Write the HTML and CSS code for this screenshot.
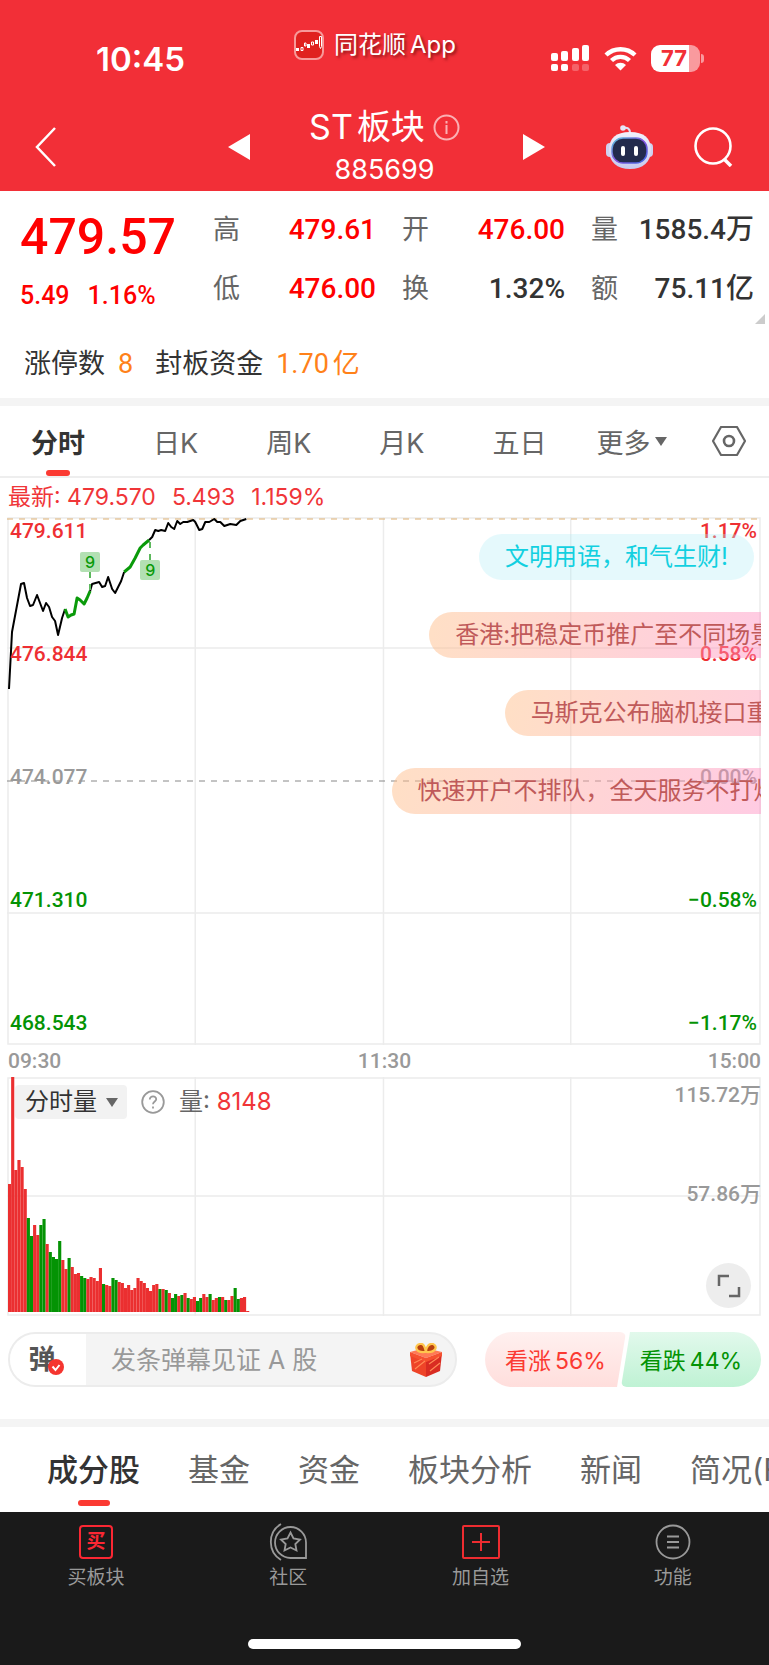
FILE: index.html
```html
<!DOCTYPE html>
<html lang="zh-CN">
<head>
  <meta charset="UTF-8">
  <meta name="viewport" content="width=device-width, initial-scale=1.0">
  <title>ST板块 885699</title>
  <link rel="stylesheet" href="styles.css">
</head>
<body>
  <header class="header">
    <div class="status-bar">
      <span class="clock">10:45</span>
      <div class="app-name">
        <svg width="30" height="30" viewBox="0 0 30 30" fill="#fff">
          <rect x="1" y="1" width="28" height="28" rx="7" fill="#e0211f" stroke="#f79a9a" stroke-width="2"/>
          <path d="M2 18h3v3H2zM13 14h3v4h-3zM21 10h3v4h-3z"/>
          <path d="M7 17.500h2v3H7zM10.500 13h1.500v3h-1.500zM17.500 12h2v3h-2zM25.500 6.500h2v10l-1 2-1-2z" fill="none" stroke="#fff"/>
        </svg>
        <span class="mixed"><span>同花顺</span><span>App</span></span>
      </div>
      <div class="status-icons">
        <svg width="39" height="28" viewBox="0 0 39 28" fill="#fff">
          <rect x="0" y="9" width="7" height="8" rx="2"/>
          <rect x="10" y="7" width="7" height="10" rx="2"/>
          <rect x="21" y="4" width="7" height="13" rx="2"/>
          <rect x="31" y="1" width="7" height="16" rx="2"/>
          <rect x="0" y="20" width="7" height="7" rx="2"/>
          <rect x="10" y="20" width="7" height="7" rx="2"/>
          <rect x="21" y="20" width="7" height="7" rx="2" opacity=".25"/>
          <rect x="31" y="20" width="7" height="7" rx="2" opacity=".25"/>
        </svg>
        <svg width="33" height="25" viewBox="0 0 33 25" fill="none" stroke="#fff" stroke-width="4.400">
          <path d="M2 9a21 21 0 0 1 29 0M7.500 14.500a13 13 0 0 1 18 0"/>
          <path d="M11 19a8 8 0 0 1 11 0l-5.500 5.500z" fill="#fff" stroke="none"/>
        </svg>
        <span class="battery">77</span>
      </div>
    </div>
    <nav class="nav">
      <button class="icon-btn back" aria-label="返回">
        <svg width="22" height="40" viewBox="0 0 22 40" fill="none" stroke="#fff" stroke-width="2.500"><path d="M20 1 2 20l18 19"/></svg>
      </button>
      <button class="icon-btn" aria-label="上一个">
        <svg width="22" height="26" viewBox="0 0 22 26"><path d="M22 0v26L0 13z" fill="#fff"/></svg>
      </button>
      <div class="title">
        <h1>
          <span class="mixed"><span>ST</span><span>板块</span></span>
          <svg width="27" height="27" viewBox="0 0 27 27" fill="none" stroke="#fbb0b3" stroke-width="2">
            <circle cx="13.500" cy="13.500" r="12"/><path d="M13.500 11v9M13.500 7v2.500"/>
          </svg>
        </h1>
        <span class="code">885699</span>
      </div>
      <button class="icon-btn" aria-label="下一个">
        <svg width="22" height="26" viewBox="0 0 22 26"><path d="M0 0v26l22-13z" fill="#fff"/></svg>
      </button>
      <button class="icon-btn robot" aria-label="智能助手">
        <svg width="47" height="44" viewBox="0 0 47 44">
          <defs>
            <linearGradient id="shell" x1="0" y1="0" x2="0" y2="1"><stop offset="0" stop-color="#f2f2fc"/><stop offset="1" stop-color="#c7c9ee"/></linearGradient>
            <linearGradient id="rim" x1="0" y1="0" x2="1" y2="1"><stop offset="0" stop-color="#56c7dc"/><stop offset=".5" stop-color="#8552e0"/><stop offset="1" stop-color="#3d6be0"/></linearGradient>
          </defs>
          <path d="M17 3c5-1 7 1 7 5" fill="none" stroke="#e0e0f5" stroke-width="2"/>
          <circle cx="17" cy="3" r="2.800" fill="#e6e6f8"/>
          <rect x="0" y="18" width="9" height="14" rx="4" fill="#cfd2f0"/>
          <rect x="38" y="18" width="9" height="14" rx="4" fill="#cfd2f0"/>
          <path d="M24 7c14 0 21 6 21 18S37 44 24 44 3 37 3 25 10 7 24 7z" fill="url(#shell)"/>
          <rect x="6" y="13" width="35" height="25" rx="11" fill="#232b4d" stroke="url(#rim)" stroke-width="1.500"/>
          <rect x="15" y="21" width="4" height="10" rx="2" fill="#fff"/>
          <rect x="28" y="21" width="4" height="10" rx="2" fill="#fff"/>
        </svg>
      </button>
      <button class="icon-btn search" aria-label="搜索">
        <svg width="39" height="40" viewBox="0 0 39 40" fill="none" stroke="#fff" stroke-width="2.600"><circle cx="19" cy="19" r="17.500"/><path d="M30 32l7 7" stroke-width="3.500"/></svg>
      </button>
    </nav>
  </header>

  <section class="quote">
    <div class="price">
      <strong>479.57</strong>
      <div class="change"><span>5.49</span><span>1.16%</span></div>
    </div>
    <dl class="stats">
      <div><dt>高</dt><dd class="up">479.61</dd></div>
      <div><dt>开</dt><dd class="up">476.00</dd></div>
      <div><dt>量</dt><dd>1585.4万</dd></div>
      <div><dt>低</dt><dd class="up">476.00</dd></div>
      <div><dt>换</dt><dd>1.32%</dd></div>
      <div><dt>额</dt><dd>75.11亿</dd></div>
    </dl>
  </section>
  <div class="limit">
    <span>涨停数</span><b>8</b>
    <span class="fund">封板资金</span><b class="mixed"><span>1.70</span><span>亿</span></b>
  </div>

  <div class="divider"></div>

  <div class="period-tabs">
    <div class="periods">
      <button class="active">分时</button>
      <button>日K</button>
      <button>周K</button>
      <button>月K</button>
      <button>五日</button>
    </div>
    <button class="more">更多<i class="caret"></i></button>
    <button class="icon-btn setting" aria-label="设置">
      <svg width="34" height="30" viewBox="0 0 34 30" fill="none" stroke="#666" stroke-width="2.200" stroke-linejoin="round"><path d="M9 1h16l8 14-8 14H9L1 15z"/><circle cx="17" cy="15" r="5" stroke-width="2.600"/></svg>
    </button>
  </div>

  <div class="latest"><span>最新: 479.570</span><span>5.493</span><span>1.159%</span></div>

  <section class="chart price-chart">
    <svg class="plot" viewBox="0 0 753 528" preserveAspectRatio="none">
      <path class="grid" d="M1 1h751v526H1zM188 0v528M376 0v528M563 0v528M0 131h753M0 396h753"/>
      <path class="high" d="M0 2h753"/>
      <path class="zero" d="M0 264h753"/>
      <polyline class="line" points="2,172 5,115 14,67 17,66 20,81 23,89 26,88 30,78 33,86 36,94 39,86 42,90 45,100 48,104 51,118 55,101 58,92"/>
      <polyline class="line nine" points="58,92 61,100 64,98 67,97 70,81 73,83 77,87 80,81 83,74"/>
      <polyline class="line" points="83,74 85,67 92,65 95,70 98,69 101,60 105,72 108,76 111,70 114,64 117,55"/>
      <polyline class="line nine" points="117,55 123,50 128,41 133,31 136,28 142,23"/>
      <polyline class="line" points="142,23 145,20 148,13 151,14 154,13 158,14 161,6 164,10 167,12 170,4 173,7 176,5 180,5 186,3 188,5 192,13 195,12 198,5 202,5 207,2 210,5 213,5 217,9 223,7 229,8 233,4 239,2"/>
    </svg>
    <div class="axis">
      <div><span class="rise">479.611</span><span class="rise">1.17%</span></div>
      <div><span class="rise">476.844</span><span class="rise">0.58%</span></div>
      <div><span>474.077</span><span>0.00%</span></div>
      <div><span class="fall">471.310</span><span class="fall">−0.58%</span></div>
      <div><span class="fall">468.543</span><span class="fall">−1.17%</span></div>
    </div>
    <span class="flag flag-above">9</span>
    <span class="flag flag-below">9</span>
    <div class="bullets">
      <p class="bullet own">文明用语，和气生财!</p>
      <p class="bullet b2">香港:把稳定币推广至不同场景</p>
      <p class="bullet b3">马斯克公布脑机接口重大进展</p>
      <p class="bullet b4">快速开户不排队，全天服务不打烊</p>
    </div>
  </section>

  <div class="times"><span>09:30</span><span>11:30</span><span>15:00</span></div>

  <section class="chart volume-chart">
    <svg class="plot" viewBox="0 0 753 239" preserveAspectRatio="none">
      <path class="grid" d="M1 1h751v237H1zM188 0v239M376 0v239M563 0v239M0 119h753"/>
      <g id="bars"></g>
    </svg>
    <div class="volume-axis"><span>115.72万</span><span>57.86万</span></div>
    <div class="volume-head">
      <div class="picker">
        <select aria-label="指标"><option>分时量</option><option>MACD</option></select>
        <i class="caret"></i>
      </div>
      <button class="icon-btn" aria-label="说明">
        <svg width="24" height="24" viewBox="0 0 24 24" fill="none" stroke="#999" stroke-width="1.800"><circle cx="12" cy="12" r="10.800"/><path d="M8.800 9.500c0-4.300 6.600-4 6.400-.2-.1 2.200-3.200 2.400-3.200 5M12 16.500v2"/></svg>
      </button>
      <span class="volume-label">量: <b>8148</b></span>
    </div>
    <button class="expand" aria-label="全屏">
      <svg width="24" height="24" viewBox="0 0 24 24" fill="none" stroke="#666" stroke-width="2.500"><path d="M2 12V2h10M22 13v9H12"/></svg>
    </button>
  </section>

  <div class="talk">
    <div class="talk-box">
      <button class="talk-switch" aria-label="弹幕开关">弹
        <svg width="16" height="16" viewBox="0 0 16 16"><circle cx="8" cy="8" r="8" fill="#f5352f"/><path d="M4.500 7.500 7.500 11l4-5" fill="none" stroke="#fff" stroke-width="2"/></svg>
      </button>
      <input type="text" aria-label="发弹幕" placeholder="发条弹幕见证 A 股">
      <button class="icon-btn gift" aria-label="礼物">
        <svg width="34" height="34" viewBox="0 0 34 34">
          <path d="M1 10l16 6v18L3 28z" fill="#ee4428"/>
          <path d="M33 10l-16 6v18l14-6z" fill="#d92c22"/>
          <path d="M1 9l15-4 17 4-16 6z" fill="#ff7a55"/>
          <path d="M1 9l16 6 16-6v4l-16 6L1 13z" fill="#f5512f"/>
          <path d="M5 20l8-4M6 26l10-8M20 21l10-7M21 28l10-8" stroke="#ff8a55" stroke-width="1.200"/>
          <path d="M16 9C6 10 5 2 11 1c4-1 5 4 6 8 0-5 3-9 7-8 5 2 3 9-7 8z" fill="#b8400f" stroke="#ffc64d" stroke-width="2.200"/>
        </svg>
      </button>
    </div>
    <div class="vote">
      <button class="vote-up"><span class="mixed"><span>看涨</span><span>56%</span></span></button>
      <button class="vote-down"><span class="mixed"><span>看跌</span><span>44%</span></span></button>
    </div>
  </div>

  <div class="divider"></div>

  <nav class="section-tabs">
    <a href="#" class="active">成分股</a>
    <a href="#">基金</a>
    <a href="#">资金</a>
    <a href="#">板块分析</a>
    <a href="#">新闻</a>
    <a href="#">简况(F10)</a>
  </nav>

  <footer class="bottom-bar">
    <div class="actions">
      <button>
        <span class="buy-icon">买</span>
        买板块
      </button>
      <button>
        <svg width="40" height="38" viewBox="0 0 40 38" fill="none" stroke="#999" stroke-width="1.800">
          <path d="M38 35H22.500A15.500 15.500 0 1 1 38 19.500zM13 1a21 21 0 0 0 0 36"/>
          <path d="M22.500 9.500l3 6 6.500 1-4.700 4.500 1.200 6.500-6-3-6 3 1.200-6.500-4.700-4.500 6.500-1z"/>
        </svg>
        社区
      </button>
      <button>
        <svg width="38" height="38" viewBox="0 0 38 38" fill="none" stroke="#ee2c30" stroke-width="2"><rect x="1" y="3" width="36" height="32" rx="1"/><path d="M10 19h18M19 10v18"/></svg>
        加自选
      </button>
      <button>
        <svg width="38" height="38" viewBox="0 0 38 38" fill="none" stroke="#999" stroke-width="1.800"><circle cx="19" cy="19" r="16.500"/><path d="M13 13.500h12M13 19h12M13 24.500h12"/></svg>
        功能
      </button>
    </div>
    <div class="home-bar"></div>
  </footer>

  <script>
    // One entry per minute: bar height, negative when the bar is green
    const volumes = [
      128, 235, 142, 152, 145, 123, -94, -76, 87, 77, -87, -93, 68, -60, -55, -53,
      -71, 52, 43, -54, 45, 38, 39, -36, -34, 33, 35, 34, 31, 44, -28, 27,
      26, -34, -32, 30, 29, 24, 27, 22, 24, 34, 31, 29, 24, 21, 27, 28,
      -23, 23, -22, 19, -14, -18, 16, -17, 19, -14, 13, 15, -11, -14, 18, 15,
      -18, 12, 14, -15, 15, -12, 12, 16, -24, -13, 14, 15, 1
    ];
    const step = 751 / 240;
    const bars = document.getElementById("bars");

    volumes.forEach((value, i) => {
      const bar = document.createElementNS("http://www.w3.org/2000/svg", "rect");
      const height = Math.abs(value);
      bar.setAttribute("x", 1 + i * step);
      bar.setAttribute("y", 235 - height);
      bar.setAttribute("width", step);
      bar.setAttribute("height", height);
      bar.setAttribute("fill", value < 0 ? "#049304" : "#eb2f30");
      bars.appendChild(bar);
    });
  </script>
</body>
</html>
```
FILE: styles.css
```css
* {
  box-sizing: border-box;
}
body {
  margin: 0;
  background-color: #fff;
  color: #333;
  font-family: Inter, "Noto Sans CJK SC", sans-serif;
  font-size: 27px;
  overflow-x: hidden;
}
button {
  padding: 0;
  border: none;
  background: none;
  color: inherit;
  font: inherit;
  cursor: pointer;
}
svg {
  display: block;
  flex: none;
}
.icon-btn {
  display: flex;
  align-items: center;
}
.mixed {
  display: inline-flex;
  align-items: baseline;
  gap: 4px;
}
.divider {
  height: 8px;
  background-color: #f4f4f4;
}
.caret {
  border: 6px solid transparent;
  border-top: 9px solid #666;
  border-bottom: none;
}

/* Header */
.header {
  background-color: #f22f37;
  color: #fff;
}
.status-bar {
  display: flex;
  height: 103px;
  padding: 27px 65px 0 96px;
}
.clock {
  width: 198px;
  padding-top: 12px;
  font-size: 33px;
  font-weight: 600;
  line-height: 40px;
}
.app-name {
  display: flex;
  align-items: center;
  gap: 10px;
  height: 36px;
  font-size: 24px;
  line-height: 36px;
  text-shadow: 2px 2px 3px rgba(70, 0, 0, 0.6);
}
.status-icons {
  display: flex;
  align-items: center;
  gap: 14px;
  height: 36px;
  margin: 13px 0 0 auto;
}
.battery {
  position: relative;
  width: 49px;
  height: 27px;
  margin-right: 4px;
  border-radius: 9px;
  background: linear-gradient(to right, #fff 77%, #f99a9e 77%);
  color: #f22f37;
  font-size: 22px;
  font-weight: 700;
  line-height: 27px;
  padding-left: 10px;
}
.battery::after {
  content: "";
  position: absolute;
  right: -4px;
  top: 9px;
  width: 3px;
  height: 9px;
  border-radius: 0 3px 3px 0;
  background-color: #f99a9e;
}
.nav {
  display: flex;
  align-items: center;
  height: 88px;
  padding: 0 36px 0 35px;
}
.back {
  width: 193px;
}
.title {
  flex: 1;
  padding-right: 4px;
  text-align: center;
}
.title h1 {
  display: flex;
  justify-content: center;
  align-items: center;
  gap: 8px;
  margin: 0 0 8px;
  font-size: 34px;
  font-weight: 400;
  line-height: 38px;
}
.code {
  display: block;
  line-height: 32px;
}
.robot {
  margin-left: 61px;
}
.search {
  margin-left: 41px;
}

/* Quote */
.quote {
  position: relative;
  display: flex;
  height: 133px;
  padding: 18px 15px 0 20px;
  font-family: Roboto, "Noto Sans CJK SC", sans-serif;
}
.quote::after {
  content: "";
  position: absolute;
  right: 4px;
  bottom: 0;
  border-left: 10px solid transparent;
  border-bottom: 10px solid #ccc;
}
.price {
  width: 193px;
  color: #f00;
}
.price strong {
  display: block;
  font-size: 50px;
  font-weight: 500;
  line-height: 56px;
}
.change {
  display: flex;
  gap: 18px;
  margin-top: 16px;
  font-size: 25px;
  font-weight: 500;
  line-height: 30px;
}
.stats {
  flex: 1;
  display: grid;
  grid-template-columns: repeat(3, 1fr);
  align-content: start;
  gap: 23px 26px;
  margin: 3px 0 0;
  line-height: 36px;
}
.stats div {
  display: flex;
  justify-content: space-between;
}
.stats dt {
  color: #666;
}
.stats dd {
  margin: 0;
  font-size: 28px;
  font-weight: 500;
  white-space: nowrap;
}
.stats .up {
  color: #f00;
}
.limit {
  display: flex;
  padding: 20px 24px 14px;
  line-height: 40px;
}
.limit b {
  margin-left: 13px;
  color: #ff8119;
  font-family: Roboto, "Noto Sans CJK SC", sans-serif;
  font-weight: 400;
}
.limit .fund {
  margin-left: 22px;
}

/* Period tabs */
.period-tabs {
  display: flex;
  align-items: center;
  height: 72px;
  padding: 0 23px 0 31px;
  border-bottom: 2px solid #eee;
  color: #666;
}
.periods {
  display: flex;
  gap: 68px;
}
.periods button {
  position: relative;
  height: 70px;
}
.period-tabs .active {
  color: #333;
  font-weight: 700;
}
.period-tabs .active::after {
  content: "";
  position: absolute;
  left: 50%;
  bottom: 0;
  width: 24px;
  height: 6px;
  margin-left: -12px;
  border-radius: 3px;
  background-color: #fb3a32;
}
.more {
  display: flex;
  align-items: center;
  gap: 5px;
  margin-left: 50px;
}
.setting {
  margin-left: auto;
}
.latest {
  display: flex;
  gap: 16px;
  padding: 0 8px;
  color: #f03538;
  font-size: 23px;
  line-height: 39px;
}

/* Charts */
.chart {
  position: relative;
  margin: 0 8px 0 7px;
}
.price-chart {
  height: 528px;
}
.volume-chart {
  height: 239px;
}
.plot {
  width: 100%;
  height: 100%;
}
.plot path,
.plot polyline {
  fill: none;
  vector-effect: non-scaling-stroke;
}
.grid {
  stroke: #ececec;
  stroke-width: 1.5px;
}
.high {
  stroke: #deb072;
  stroke-dasharray: 6 6;
}
.zero {
  stroke: #888;
  stroke-dasharray: 6 6;
}
.line {
  stroke: #000;
  stroke-width: 2px;
  stroke-linejoin: round;
}
.plot .nine {
  stroke: #0a9a0a;
  stroke-width: 3px;
}
.axis,
.bullets {
  position: absolute;
  inset: 0;
  display: flex;
  flex-direction: column;
}
.axis {
  justify-content: space-between;
  padding: 0 4px 8px 3px;
  color: #999;
  font-family: Roboto, sans-serif;
  font-size: 21px;
  font-weight: 500;
  line-height: 28px;
}
.axis div {
  display: flex;
  justify-content: space-between;
}
.rise {
  color: #ee2f33;
}
.fall {
  color: #049304;
}
.flag {
  position: absolute;
  width: 20px;
  height: 20px;
  margin-left: -10px;
  border-radius: 2px;
  background-color: #b3e0b3;
  color: #0a9a0a;
  font-size: 16px;
  font-weight: 500;
  line-height: 20px;
  text-align: center;
}
.flag::after {
  content: "";
  position: absolute;
  left: 9px;
  height: 18px;
  border-left: 2px dashed #5cb85c;
}
.flag-above {
  left: 11%;
  top: 35px;
}
.flag-above::after {
  top: 20px;
}
.flag-below {
  left: 19%;
  top: 43px;
}
.flag-below::after {
  bottom: 20px;
}
.bullets {
  gap: 32px;
  align-items: flex-start;
  padding-top: 17px;
  overflow: hidden;
}
.bullet {
  flex: none;
  margin: 0;
  padding: 0 26px;
  border-radius: 23px;
  background: linear-gradient(100deg, rgba(255, 192, 140, 0.5), rgba(255, 135, 200, 0.45));
  color: #c05a5a;
  font-size: 24px;
  line-height: 46px;
  white-space: nowrap;
}
.own {
  align-self: flex-end;
  margin-right: 7px;
  background: rgba(180, 238, 246, 0.35);
  color: #12d0e0;
}
.b2 {
  margin-left: 56%;
}
.b3 {
  margin-left: 66%;
}
.b4 {
  margin-left: 51%;
}
.times {
  display: flex;
  justify-content: space-between;
  padding: 0 8px;
  color: #999;
  font-family: Roboto, sans-serif;
  font-size: 21px;
  font-weight: 500;
  line-height: 32px;
}
.volume-axis {
  position: absolute;
  top: 4px;
  right: 0;
  display: flex;
  flex-direction: column;
  gap: 71px;
  color: #999;
  font-family: Roboto, "Noto Sans CJK SC", sans-serif;
  font-size: 21px;
  font-weight: 500;
  line-height: 28px;
  text-align: right;
}
.volume-head {
  position: absolute;
  top: 8px;
  left: 8px;
  display: flex;
  align-items: center;
  gap: 14px;
  font-size: 24px;
  line-height: 34px;
}
.picker {
  position: relative;
}
.picker select {
  width: 112px;
  height: 34px;
  padding: 0 10px;
  appearance: none;
  border: none;
  border-radius: 4px;
  background-color: #f2f2f2;
  color: #333;
  font: inherit;
}
.picker .caret {
  position: absolute;
  right: 9px;
  top: 13px;
  pointer-events: none;
}
.volume-label {
  color: #666;
}
.volume-label b {
  color: #f03538;
  font-weight: 400;
}
.expand {
  position: absolute;
  right: 10px;
  bottom: 8px;
  display: flex;
  align-items: center;
  justify-content: center;
  width: 45px;
  height: 45px;
  border-radius: 50%;
  background-color: #ededed;
}

/* Comment box and vote */
.talk {
  display: flex;
  gap: 28px;
  padding: 16px 8px 32px;
}
.talk-box {
  flex: 1;
  display: flex;
  align-items: center;
  min-width: 0;
  height: 55px;
  padding-right: 12px;
  overflow: hidden;
  border: 2px solid #ececec;
  border-radius: 28px;
  background-color: #f4f4f4;
}
.talk-switch {
  position: relative;
  width: 76px;
  height: 100%;
  padding-right: 12px;
  background-color: #fff;
  color: #555;
  font-size: 27px;
  font-weight: 700;
  line-height: 48px;
}
.talk-switch svg {
  position: absolute;
  left: 38px;
  top: 25px;
}
.talk-box input {
  flex: 1;
  min-width: 0;
  height: 100%;
  padding: 0 0 0 25px;
  border: none;
  outline: none;
  background: none;
  font: inherit;
  font-size: 25px;
}
.talk-box input::placeholder {
  color: #999;
}
.vote {
  display: flex;
  font-size: 23px;
}
.vote button {
  height: 55px;
  padding-bottom: 2px;
}
.vote-up {
  width: 141px;
  border-radius: 28px 6px 6px 28px;
  background: linear-gradient(#fff0ef, #ffdedc);
  clip-path: polygon(0 0, 100% 0, calc(100% - 9px) 100%, 0 100%);
}
.vote .vote-up {
  color: #fb3a32;
}
.vote-down {
  width: 140px;
  margin-left: -5px;
  border-radius: 6px 28px 28px 6px;
  background: linear-gradient(#e2f9ec, #bff2d4);
  clip-path: polygon(9px 0, 100% 0, 100% 100%, 0 100%);
}
.vote .vote-down {
  color: #049304;
}

/* Section tabs */
.section-tabs {
  display: flex;
  gap: 48px;
  padding-left: 47px;
  overflow: hidden;
  font-size: 31px;
  line-height: 85px;
  white-space: nowrap;
}
.section-tabs a {
  position: relative;
  color: #666;
  text-decoration: none;
}
.section-tabs .active {
  color: #333;
  font-weight: 500;
}
.section-tabs .active::after {
  content: "";
  position: absolute;
  left: 50%;
  bottom: 6px;
  width: 32px;
  height: 6px;
  margin-left: -16px;
  border-radius: 3px;
  background-color: #fb3a32;
}

/* Bottom bar */
.bottom-bar {
  height: 153px;
  padding-top: 11px;
  background-color: #1a1a1a;
}
.actions {
  display: grid;
  grid-template-columns: repeat(4, 1fr);
}
.actions button {
  display: flex;
  flex-direction: column;
  align-items: center;
  gap: 5px;
  color: #999;
  font-size: 19px;
  line-height: 24px;
}
.buy-icon {
  width: 34px;
  height: 34px;
  margin: 2px 0;
  border: 2px solid #fb2733;
  border-radius: 4px;
  color: #fb2733;
  font-weight: 700;
  line-height: 29px;
}
.home-bar {
  width: 273px;
  height: 10px;
  margin: 49px auto 0;
  border-radius: 5px;
  background-color: #fff;
}
```
